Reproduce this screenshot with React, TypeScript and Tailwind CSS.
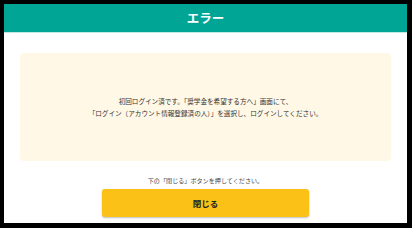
export default function App() {
  return (
    <div className="w-[412px] h-[228px] bg-black pt-[4px] pl-[4px] pr-[5px] pb-[5px]" style={{ fontFamily: '"Noto Sans CJK JP", "Noto Sans", sans-serif' }}>
      <div className="w-full h-full bg-white flex flex-col">
        <div className="h-[29px] bg-[#00a596] border-b border-[#bfe8e3] flex items-center justify-center">
          <span className="text-white text-[12.5px] font-bold leading-none">エラー</span>
        </div>
        <div className="mx-[16px] mt-[20px] h-[108px] rounded-[4px] bg-[#fff8e6] flex flex-col items-center justify-center text-[6.6px] leading-[12px] text-[#333]">
          <p>初回ログイン済です。「奨学金を希望する方へ」画面にて、</p>
          <p>「ログイン（アカウント情報登録済の人）」を選択し、ログインしてください。</p>
        </div>
        <p className="mt-[15px] text-center text-[6.1px] leading-[10px] text-[#444]">下の「閉じる」ボタンを押してください。</p>
        <div className="flex justify-center mt-[3px]">
          <button className="w-[207px] h-[28px] rounded-[3px] bg-[#fcc117] shadow-[0_1px_2px_rgba(0,0,0,0.25)] text-[8.5px] font-bold text-[#222] flex items-center justify-center">
            閉じる
          </button>
        </div>
      </div>
    </div>
  );
}
